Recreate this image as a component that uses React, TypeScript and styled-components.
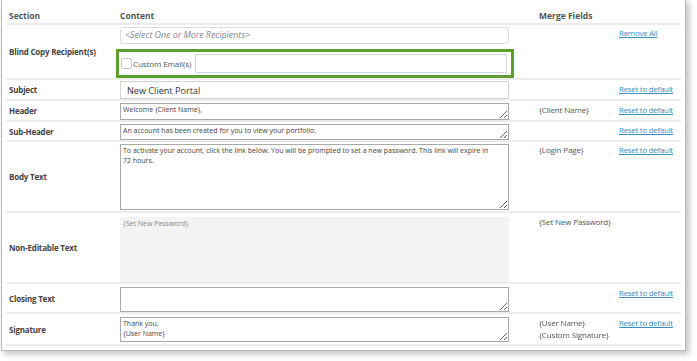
import React from 'react'
import styled, {createGlobalStyle} from 'styled-components'

const Global = createGlobalStyle`
  html, body { margin: 0; padding: 0; background: #ffffff; }
  body { font-family: "Open Sans", "Noto Sans", sans-serif; color: #444; }
`

const Page = styled.div`
  width: 697px;
  height: 361px;
  overflow: hidden;
  background: #fff;
`

const Panel = styled.div`
  margin: -1px 0 0 1px;
  width: 685px;
  height: 352px;
  border: 1px solid #b9b9b9;
  box-shadow: 3px 3px 6px rgba(0, 0, 0, 0.25);
  background: #fff;
  padding: 0 4px 0 4px;
  box-sizing: border-box;
`

const Row = styled.div<{$h: number}>`
  display: grid;
  grid-template-columns: 114px 419px 80px 1fr;
  grid-template-rows: 100%;
  height: ${p => p.$h}px;
  border-bottom: 2px solid #ececec;
  box-sizing: border-box;
  white-space: nowrap;
`

const HeadCell = styled.div<{$pl?: number}>`
  font-size: 8.5px;
  font-weight: 700;
  color: #555;
  padding: 10px 0 0 ${p => p.$pl ?? 0}px;
`

const Label = styled.div`
  align-self: center;
  padding-left: 3px;
  font-size: 8px;
  letter-spacing: -0.2px;
  font-weight: 700;
  color: #444;
`

const Content = styled.div<{$pt?: number}>`
  padding-top: ${p => p.$pt ?? 1}px;
  display: flex;
  flex-direction: column;
  gap: 5px;
`

const Merge = styled.div<{$pt?: number}>`
  padding-top: ${p => p.$pt ?? 5}px;
  font-size: 8px;
  letter-spacing: -0.15px;
  line-height: 12px;
  color: #555;
`

const Action = styled.a<{$pt?: number}>`
  display: block;
  padding-top: ${p => p.$pt ?? 5}px;
  font-size: 8px;
  letter-spacing: -0.3px;
  line-height: 12px;
  color: #3a8fc4;
  text-decoration: underline;
  cursor: pointer;
`

const Picker = styled.div`
  width: 389px;
  height: 17px;
  border: 1px solid #dcdcdc;
  border-radius: 3px;
  box-sizing: border-box;
  padding: 0 4px;
  font-size: 8.8px;
  line-height: 15px;
  font-style: italic;
  color: #888;
`

const Highlight = styled.div`
  margin-left: -4px;
  width: 398px;
  height: 30px;
  border: 3px solid #5d9e2e;
  box-sizing: border-box;
  display: flex;
  align-items: center;
  padding-left: 2px;
`

const Check = styled.span`
  width: 11px;
  height: 11px;
  border: 1px solid #c8c8c8;
  border-radius: 2px;
  box-sizing: border-box;
  margin-right: 1px;
`

const CheckLabel = styled.span`
  font-size: 8px;
  letter-spacing: -0.1px;
  color: #555;
  margin-right: 4px;
`

const TextInput = styled.input<{$w: number; $h: number; $fs?: number}>`
  width: ${p => p.$w}px;
  height: ${p => p.$h}px;
  border: 1px solid #d4d4d4;
  box-sizing: border-box;
  padding: 0 6px;
  font-family: inherit;
  font-size: ${p => p.$fs ?? 9}px;
  color: #333;
  outline: none;
`

const Area = styled.textarea<{$h: number; $mt?: number; $scroll?: boolean}>`
  display: block;
  width: 389px;
  height: ${p => p.$h}px;
  margin-top: ${p => p.$mt ?? 0}px;
  border: 1px solid #a9a9a9;
  box-sizing: border-box;
  padding: 1px 10px 1px 2px;
  font-family: inherit;
  font-size: 7px;
  line-height: 10px;
  color: #444;
  resize: vertical;
  outline: none;
  overflow-y: ${p => (p.$scroll ? 'scroll' : 'hidden')};
  &::-webkit-scrollbar { width: 10px; }
  &::-webkit-scrollbar-track { background: #f0f0f0; }
  &::-webkit-scrollbar-thumb { background: #d6d6d6; }
  &::-webkit-scrollbar-button:single-button { display: block; height: 8px; background: #f0f0f0; }
`

const Locked = styled.div`
  width: 389px;
  height: 65px;
  margin-top: 3px;
  background: #f3f3f3;
  box-sizing: border-box;
  padding: 2px 3px;
  font-size: 7px;
  color: #888;
`

export default function App() {
  return (
    <Page>
      <Global />
      <Panel>
        <Row $h={25}>
          <HeadCell $pl={3}>Section</HeadCell>
          <HeadCell>Content</HeadCell>
          <HeadCell>Merge Fields</HeadCell>
          <div />
        </Row>
        <Row $h={55}>
          <Label>Blind Copy Recipient(s)</Label>
          <Content $pt={2}>
            <Picker>&lt;Select One or More Recipients&gt;</Picker>
            <Highlight>
              <Check />
              <CheckLabel>Custom Email(s)</CheckLabel>
              <TextInput $w={312} $h={19} />
            </Highlight>
          </Content>
          <div />
          <Action $pt={2}>Remove All</Action>
        </Row>
        <Row $h={21}>
          <Label>Subject</Label>
          <Content>
            <TextInput $w={389} $h={18} $fs={9.1} defaultValue="New Client Portal" />
          </Content>
          <div />
          <Action $pt={3}>Reset to default</Action>
        </Row>
        <Row $h={21}>
          <Label>Header</Label>
          <Content>
            <Area $h={17} $mt={1} defaultValue="Welcome {Client Name}," />
          </Content>
          <Merge $pt={3}>{'{Client Name}'}</Merge>
          <Action $pt={3}>Reset to default</Action>
        </Row>
        <Row $h={20}>
          <Label>Sub-Header</Label>
          <Content>
            <Area $h={16} $mt={1} defaultValue="An account has been created for you to view your portfolio." />
          </Content>
          <div />
          <Action $pt={2}>Reset to default</Action>
        </Row>
        <Row $h={71}>
          <Label>Body Text</Label>
          <Content>
            <Area
              $h={66}
              $mt={1}
              defaultValue="To activate your account, click the link below. You will be prompted to set a new password. This link will expire in 72 hours."
            />
          </Content>
          <Merge $pt={2}>{'{Login Page}'}</Merge>
          <Action $pt={2}>Reset to default</Action>
        </Row>
        <Row $h={71}>
          <Label>Non-Editable Text</Label>
          <Content>
            <Locked>{'{Set New Password}'}</Locked>
          </Content>
          <Merge $pt={3}>{'{Set New Password}'}</Merge>
          <div />
        </Row>
        <Row $h={30}>
          <Label>Closing Text</Label>
          <Content>
            <Area $h={25} $mt={2} defaultValue="" />
          </Content>
          <div />
          <Action $pt={3}>Reset to default</Action>
        </Row>
        <Row $h={32}>
          <Label>Signature</Label>
          <Content>
            <Area $h={25} $mt={2} $scroll defaultValue={'Thank you,\n{User Name}\n'} />
          </Content>
          <Merge $pt={3}>
            {'{User Name}'}
            <br />
            {'{Custom Signature}'}
          </Merge>
          <Action $pt={3}>Reset to default</Action>
        </Row>
      </Panel>
    </Page>
  )
}
